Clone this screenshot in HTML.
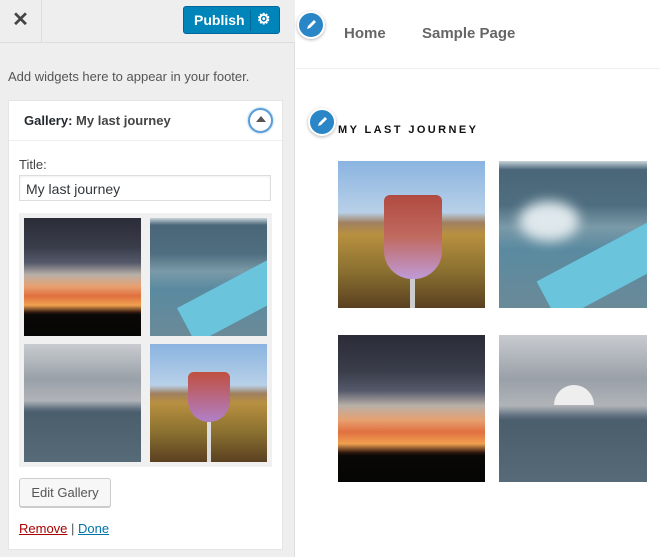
<!DOCTYPE html>
<html><head><style>
*{box-sizing:border-box;margin:0;padding:0}
body{width:660px;height:557px;overflow:hidden;background:#fff;font-family:"Liberation Sans",sans-serif;position:relative}
.a{position:absolute}
.sb{left:0;top:0;width:295px;height:557px;background:#eee;border-right:1px solid #ddd}
.img{position:absolute;overflow:hidden}
.sunset{background:linear-gradient(#2a2c38 0%,#3a3d4a 25%,#55596a 38%,#b8b0a8 48%,#e8a070 58%,#e07040 66%,#f0a050 74%,#301810 80%,#0a0806 82%,#050505 100%)}
.pool{background:linear-gradient(#c8d4da 0%,#4a6678 6%,#4e6e80 30%,#7a9aa8 45%,#5a8aa0 60%,#6a8a98 100%)}
.opera{background:linear-gradient(#c8ccd0 0%,#9aa0a8 30%,#b0b4b8 48%,#607080 55%,#4a5e6c 58%,#566a78 100%)}
.wine{background:linear-gradient(#8ab4e0 0%,#b8d0e8 35%,#a08060 42%,#b89040 50%,#8a7030 75%,#5a4020 100%)}
.pen{width:28px;height:28px;border-radius:50%;background:#2a86c6;border:2px solid #fff;box-shadow:0 1px 3px rgba(0,0,0,.3)}
</style></head><body>
<div class="a sb"></div>
<div class="a" style="left:0;top:0;width:295px;height:43px;border-bottom:1px solid #ddd;background:#eee"></div>
<div class="a" style="left:0;top:0;width:42px;height:43px;border-right:1px solid #ddd;font-size:20px;font-weight:bold;color:#444;text-align:center;line-height:40px">✕</div>
<div class="a" style="left:183px;top:6px;width:97px;height:28px;background:#0085ba;border-radius:3px;border:1px solid #006799;color:#fff;font-size:14px;font-weight:bold;line-height:26px"><span style="position:absolute;left:10px">Publish</span><span style="position:absolute;left:66px;top:3px;width:1px;height:21px;background:#006799"></span><span style="position:absolute;left:73px;font-size:15px">⚙</span></div>
<div class="a" style="left:8px;top:69px;font-size:13px;color:#555">Add widgets here to appear in your footer.</div>
<div class="a" style="left:8px;top:100px;width:275px;height:450px;background:#fff;border:1px solid #e5e5e5"></div>
<div class="a" style="left:9px;top:101px;width:273px;height:40px;border-bottom:1px solid #eee"></div>
<div class="a" style="left:24px;top:113px;font-size:13px;color:#23282d"><b>Gallery:</b> <span style="color:#444;font-weight:600">My last journey</span></div>
<div class="a" style="left:248px;top:108px;width:25px;height:25px;border-radius:50%;border:2px solid #5b9dd9;box-shadow:0 0 2px rgba(30,140,190,.6)"><div style="position:absolute;left:6px;top:6px;width:0;height:0;border-left:5px solid transparent;border-right:5px solid transparent;border-bottom:6px solid #555"></div></div>
<div class="a" style="left:19px;top:157px;font-size:13px;color:#444">Title:</div>
<div class="a" style="left:19px;top:175px;width:252px;height:26px;border:1px solid #ddd;box-shadow:inset 0 1px 2px rgba(0,0,0,.07);font-size:14px;color:#32373c;padding:5px 6px">My last journey</div>
<div class="a" style="left:19px;top:213px;width:253px;height:254px;background:#f0f0f0"></div>
<div class="img sunset" style="left:24px;top:218px;width:117px;height:118px"></div>
<div class="img pool" style="left:150px;top:218px;width:117px;height:118px"><div class="a" style="left:30px;top:62px;width:110px;height:40px;background:#6ac4dc;transform:rotate(-28deg)"></div></div>
<div class="img opera" style="left:24px;top:344px;width:117px;height:118px"></div>
<div class="img wine" style="left:150px;top:344px;width:117px;height:118px"><div class="a" style="left:38px;top:28px;width:42px;height:50px;border-radius:6px 6px 22px 22px;background:linear-gradient(#c05040,#b080c8)"></div><div class="a" style="left:57px;top:78px;width:4px;height:40px;background:#ddd"></div></div>
<div class="a" style="left:19px;top:478px;width:92px;height:29px;background:#f7f7f7;border:1px solid #ccc;border-radius:3px;box-shadow:0 1px 0 #ccc;font-size:13px;color:#555;text-align:center;line-height:27px">Edit Gallery</div>
<div class="a" style="left:19px;top:521px;font-size:13px;color:#555"><span style="color:#a00;text-decoration:underline">Remove</span> | <span style="color:#0073aa;text-decoration:underline">Done</span></div>

<div class="a pen" style="left:297px;top:11px"><svg width="24" height="24" viewBox="0 0 24 24"><path d="M8 16l1-3 6-6 2 2-6 6z" fill="#fff"/></svg></div>
<div class="a" style="left:344px;top:25px;font-size:15px;font-weight:bold;color:#666">Home</div>
<div class="a" style="left:422px;top:25px;font-size:15px;font-weight:bold;color:#666">Sample Page</div>
<div class="a" style="left:296px;top:68px;width:364px;height:1px;background:#eee"></div>
<div class="a pen" style="left:308px;top:108px"><svg width="24" height="24" viewBox="0 0 24 24"><path d="M8 16l1-3 6-6 2 2-6 6z" fill="#fff"/></svg></div>
<div class="a" style="left:338px;top:124px;font-size:11px;font-weight:900;letter-spacing:2.4px;color:#111">MY LAST JOURNEY</div>
<div class="img wine" style="left:338px;top:161px;width:147px;height:147px"><div class="a" style="left:46px;top:34px;width:58px;height:84px;border-radius:6px 6px 28px 28px;background:linear-gradient(#b04a40,#c06a60 50%,#c09ad8)"></div><div class="a" style="left:72px;top:118px;width:5px;height:30px;background:#ccc"></div></div>
<div class="img pool" style="left:499px;top:161px;width:148px;height:147px"><div class="a" style="left:40px;top:85px;width:140px;height:45px;background:#6ac4dc;transform:rotate(-28deg)"></div><div class="a" style="left:20px;top:40px;width:60px;height:40px;background:#dfe8ec;border-radius:50%;filter:blur(6px)"></div></div>
<div class="img sunset" style="left:338px;top:335px;width:147px;height:147px"></div>
<div class="img opera" style="left:499px;top:335px;width:148px;height:147px"><div class="a" style="left:55px;top:50px;width:40px;height:20px;background:#eee;border-radius:20px 20px 0 0"></div></div>
</body></html>
